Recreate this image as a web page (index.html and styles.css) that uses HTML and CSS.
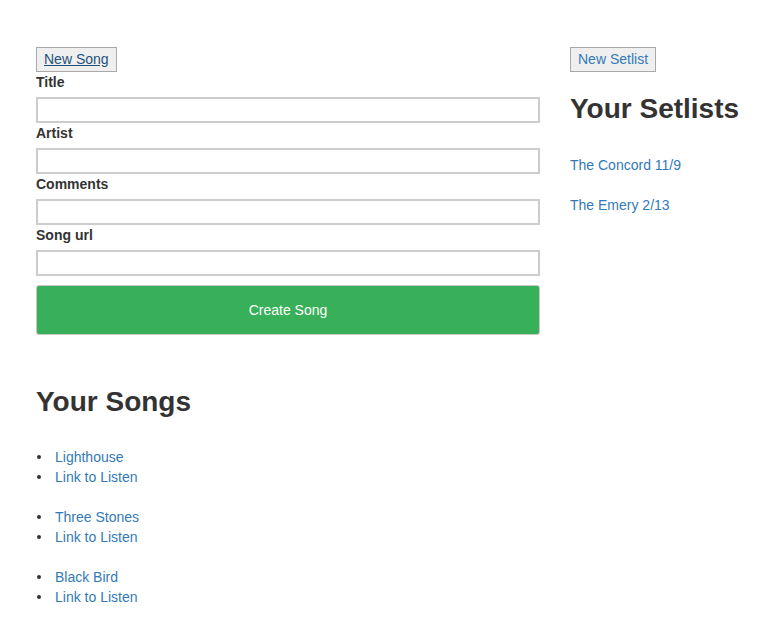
FILE: index.html
```html
<!DOCTYPE html>
<html>
<head>
<meta charset="utf-8">
<link rel="stylesheet" href="styles.css">
</head>
<body>
<div class="page">
  <div class="main">
    <span class="btn-plain"><a class="link-active" href="#">New Song</a></span>
    <form class="song-form">
      <label class="field-label">Title</label>
      <input class="field-input" type="text">
      <label class="field-label">Artist</label>
      <input class="field-input" type="text">
      <label class="field-label">Comments</label>
      <input class="field-input" type="text">
      <label class="field-label">Song url</label>
      <input class="field-input" type="text">
      <button class="btn-create" type="button">Create Song</button>
    </form>
    <h2 class="heading songs-heading">Your Songs</h2>
    <ul class="song-list">
      <li><a href="#">Lighthouse</a></li>
      <li><a href="#">Link to Listen</a></li>
    </ul>
    <ul class="song-list">
      <li><a href="#">Three Stones</a></li>
      <li><a href="#">Link to Listen</a></li>
    </ul>
    <ul class="song-list">
      <li><a href="#">Black Bird</a></li>
      <li><a href="#">Link to Listen</a></li>
    </ul>
  </div>
  <div class="side">
    <span class="btn-plain"><a href="#">New Setlist</a></span>
    <h2 class="heading setlists-heading">Your Setlists</h2>
    <div class="setlist"><a href="#">The Concord 11/9</a></div>
    <div class="setlist"><a href="#">The Emery 2/13</a></div>
  </div>
</div>
</body>
</html>
```
FILE: styles.css
```css
html, body {
  margin: 0;
  padding: 0;
  background: #fff;
}
body {
  font-family: "Liberation Sans", Arial, Helvetica, sans-serif;
  font-size: 14px;
  line-height: 20px;
  color: #333;
}
a {
  color: #337ab7;
  text-decoration: none;
}
a.link-active {
  color: #23527c;
  text-decoration: underline;
}
.page {
  display: flex;
  padding: 47px 0 0 36px;
}
.main {
  width: 504px;
}
.side {
  margin-left: 30px;
}
.btn-plain {
  display: inline-block;
  padding: 1px 7px 2px;
  border: 1px solid #a9a9a9;
  background: #efefef;
  line-height: 20px;
  vertical-align: top;
}
.song-form {
  display: flex;
  flex-direction: column;
  margin: 0;
}
.field-label {
  font-weight: bold;
  display: block;
  margin-bottom: 5px;
}
.field-input {
  display: block;
  box-sizing: border-box;
  width: 504px;
  height: 26px;
  margin: 0;
  border: 2px solid #cdcdcd;
  background: #fff;
  padding: 0 4px;
  font: inherit;
}
.btn-create {
  margin-top: 9px;
  height: 50px;
  width: 504px;
  background: #38b05a;
  border: 1px solid #c9c9c9;
  border-radius: 3px;
  color: #fff;
  font-family: "Liberation Sans", Arial, sans-serif;
  font-size: 14px;
  padding: 0;
}
.heading {
  font-size: 28px;
  font-weight: bold;
  line-height: 33px;
  margin: 0 0 10px;
  color: #333;
}
.songs-heading {
  margin-top: 50px;
}
.setlists-heading {
  margin-top: 20px;
}
.song-list {
  margin: 29px 0 0;
  padding-left: 19px;
  list-style: none;
}
.song-list + .song-list {
  margin-top: 20px;
}
.song-list li::before {
  content: "";
  display: inline-block;
  width: 4px;
  height: 4px;
  border-radius: 50%;
  background: #333;
  margin-left: -18px;
  margin-right: 14px;
  vertical-align: 3px;
}
.setlist {
  margin-top: 30px;
}
.setlist + .setlist {
  margin-top: 20px;
}
```
